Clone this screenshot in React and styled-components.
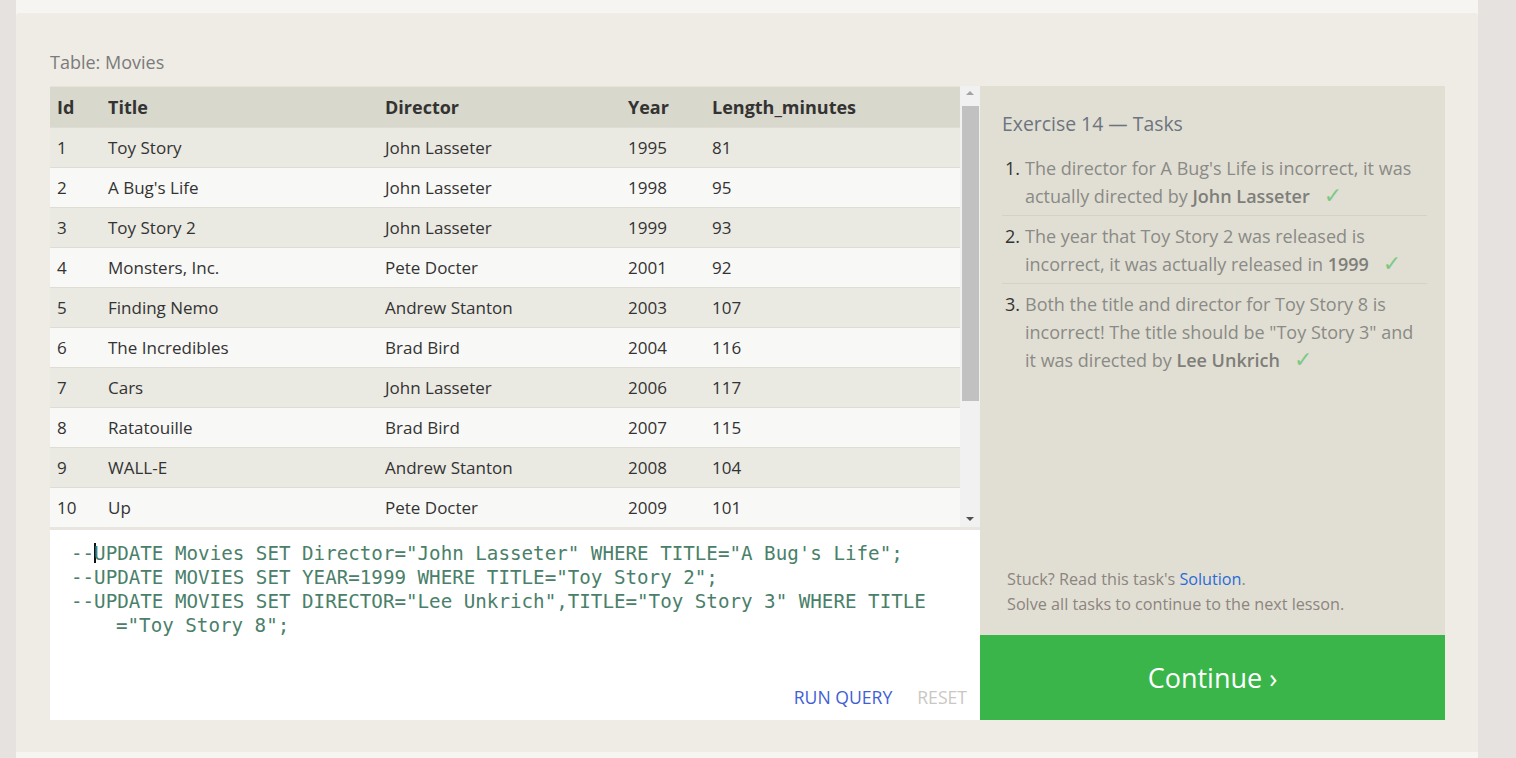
import React from 'react';
import styled, { createGlobalStyle } from 'styled-components';

const GlobalStyle = createGlobalStyle`
  html, body {
    margin: 0;
    padding: 0;
    background: #e6e2df;
    font-family: 'Open Sans', 'Noto Sans', sans-serif;
  }
`;

const Page = styled.div`
  width: 1462px;
  margin-left: 16px;
  height: 758px;
  background: #f6f5f1;
  padding-top: 13px;
  box-sizing: border-box;
`;

const Panel = styled.div`
  height: 739px;
  background: #efece5;
  border-radius: 3px 3px 0 0;
  padding: 36px 33px 0 34px;
  box-sizing: border-box;
`;

const Caption = styled.div`
  font-size: 18px;
  color: #7b7b7b;
  line-height: 26px;
  margin-bottom: 11px;
`;

const Workspace = styled.div`
  display: flex;
  height: 634px;
`;

const LeftColumn = styled.div`
  width: 930px;
  display: flex;
  flex-direction: column;
`;

const TableArea = styled.div`
  display: flex;
  height: 441px;
  border-bottom: 3px solid #e8e6df;
`;

const TableViewport = styled.div`
  flex: 1;
  overflow: hidden;
`;

const Table = styled.table`
  width: 100%;
  border-collapse: collapse;
  table-layout: fixed;
  font-size: 17px;
  color: #333;
`;

const HeadCell = styled.th`
  text-align: left;
  font-weight: 700;
  font-size: 18px;
  background: #d9d8cc;
  height: 41px;
  padding: 0 7px;
  border-top: 1px solid #e4e3da;
  box-sizing: border-box;
`;

const Row = styled.tr`
  background: ${p => (p.$odd ? '#eae9e2' : '#f8f8f6')};
`;

const Cell = styled.td`
  height: 40px;
  padding: 0 7px;
  border-top: 1px solid #dedcd4;
  box-sizing: border-box;
  white-space: nowrap;
`;

const Scrollbar = styled.div`
  width: 20px;
  background: #f1f1f1;
  display: flex;
  flex-direction: column;
  align-items: center;
  padding-top: 5px;
  box-sizing: border-box;
`;

const Arrow = styled.div`
  width: 0;
  height: 0;
  border-left: 4px solid transparent;
  border-right: 4px solid transparent;
  ${p => (p.$down ? 'border-top: 4px solid #505050;' : 'border-bottom: 4px solid #a3a3a3;')}
`;

const Thumb = styled.div`
  width: 17px;
  height: 295px;
  background: #c1c1c1;
  margin: 11px 0 0 1px;
`;

const Spacer = styled.div`
  flex: 1;
`;

const DownArrow = styled(Arrow)`
  margin-bottom: 6px;
`;

const Editor = styled.div`
  flex: 1;
  background: #fff;
  display: flex;
  flex-direction: column;
  padding: 12px 13px 11px 21px;
  box-sizing: border-box;
`;

const Code = styled.pre`
  margin: 0;
  font-family: 'DejaVu Sans Mono', 'Liberation Mono', monospace;
  font-size: 19.2px;
  line-height: 24px;
  color: #4a806a;
  flex: 1;
`;

const CodeLine = styled.div`
  padding-left: ${p => (p.$wrap ? '45px' : '0')};
`;

const Caret = styled.span`
  display: inline-block;
  width: 2px;
  height: 20px;
  background: #111;
  vertical-align: -3px;
  margin-right: -2px;
`;

const Actions = styled.div`
  display: flex;
  justify-content: flex-end;
  gap: 25px;
`;

const ActionButton = styled.span`
  font-size: 17.6px;
  text-transform: uppercase;
  color: ${p => (p.$muted ? '#c9c7c3' : '#3f5fd5')};
`;

const Side = styled.div`
  width: 465px;
  display: flex;
  flex-direction: column;
`;

const TaskPanel = styled.div`
  flex: 1;
  background: #e1dfd3;
  padding: 24px 18px 18px 22px;
  display: flex;
  flex-direction: column;
  box-sizing: border-box;
`;

const TaskTitle = styled.div`
  font-size: 19.4px;
  color: #6d7480;
  line-height: 28px;
  margin-bottom: 16px;
`;

const TaskList = styled.div`
  display: flex;
  flex-direction: column;
`;

const Task = styled.div`
  display: flex;
  padding: 0 0 5px 0;
  margin-bottom: 6px;
  border-bottom: ${p => (p.$last ? 'none' : '1px solid #d4d2c6')};
`;

const TaskNum = styled.span`
  width: 20px;
  flex-shrink: 0;
  padding-left: 3px;
  color: #333;
  font-size: 18px;
  line-height: 28px;
`;

const TaskText = styled.span`
  color: #8a8a86;
  font-size: 18px;
  line-height: 28px;
  b {
    color: #7e7e7a;
    font-weight: 600;
  }
`;

const Check = styled.span`
  color: #7cc885;
  font-family: 'DejaVu Sans', sans-serif;
  font-size: 22px;
  line-height: 20px;
  margin-left: 14px;
`;

const Help = styled.div`
  margin-top: auto;
  padding-left: 5px;
  font-size: 16.2px;
  line-height: 25px;
  color: #8c8480;
  a {
    color: #2a6bd8;
    text-decoration: none;
  }
`;

const ContinueButton = styled.div`
  height: 85px;
  background: #3ab54a;
  color: #fff;
  font-size: 27px;
  display: flex;
  align-items: center;
  justify-content: center;
`;

const movies = [
  [1, 'Toy Story', 'John Lasseter', 1995, 81],
  [2, "A Bug's Life", 'John Lasseter', 1998, 95],
  [3, 'Toy Story 2', 'John Lasseter', 1999, 93],
  [4, 'Monsters, Inc.', 'Pete Docter', 2001, 92],
  [5, 'Finding Nemo', 'Andrew Stanton', 2003, 107],
  [6, 'The Incredibles', 'Brad Bird', 2004, 116],
  [7, 'Cars', 'John Lasseter', 2006, 117],
  [8, 'Ratatouille', 'Brad Bird', 2007, 115],
  [9, 'WALL-E', 'Andrew Stanton', 2008, 104],
  [10, 'Up', 'Pete Docter', 2009, 101],
  [11, 'Toy Story 3', 'Lee Unkrich', 2010, 103],
  [12, 'Cars 2', 'John Lasseter', 2011, 120],
];

const App = () => {
  return (
    <>
      <GlobalStyle />
      <Page>
        <Panel>
          <Caption>Table: Movies</Caption>
          <Workspace>
            <LeftColumn>
              <TableArea>
                <TableViewport>
                  <Table>
                    <colgroup>
                      <col style={{ width: 51 }} />
                      <col style={{ width: 277 }} />
                      <col style={{ width: 243 }} />
                      <col style={{ width: 84 }} />
                      <col />
                    </colgroup>
                    <thead>
                      <tr>
                        <HeadCell>Id</HeadCell>
                        <HeadCell>Title</HeadCell>
                        <HeadCell>Director</HeadCell>
                        <HeadCell>Year</HeadCell>
                        <HeadCell>Length_minutes</HeadCell>
                      </tr>
                    </thead>
                    <tbody>
                      {movies.map((m, i) => (
                        <Row key={m[0]} $odd={i % 2 === 0}>
                          {m.map((v, j) => (
                            <Cell key={j}>{v}</Cell>
                          ))}
                        </Row>
                      ))}
                    </tbody>
                  </Table>
                </TableViewport>
                <Scrollbar>
                  <Arrow />
                  <Thumb />
                  <Spacer />
                  <DownArrow $down />
                </Scrollbar>
              </TableArea>
              <Editor>
                <Code>
                  <CodeLine>--<Caret />UPDATE Movies SET Director="John Lasseter" WHERE TITLE="A Bug's Life";</CodeLine>
                  <CodeLine>--UPDATE MOVIES SET YEAR=1999 WHERE TITLE="Toy Story 2";</CodeLine>
                  <CodeLine>--UPDATE MOVIES SET DIRECTOR="Lee Unkrich",TITLE="Toy Story 3" WHERE TITLE</CodeLine>
                  <CodeLine $wrap>="Toy Story 8";</CodeLine>
                </Code>
                <Actions>
                  <ActionButton>Run Query</ActionButton>
                  <ActionButton $muted>Reset</ActionButton>
                </Actions>
              </Editor>
            </LeftColumn>
            <Side>
              <TaskPanel>
                <TaskTitle>Exercise 14 — Tasks</TaskTitle>
                <TaskList>
                  <Task>
                    <TaskNum>1.</TaskNum>
                    <TaskText>
                      The director for A Bug's Life is incorrect, it was actually directed by <b>John Lasseter</b>
                      <Check>✓</Check>
                    </TaskText>
                  </Task>
                  <Task>
                    <TaskNum>2.</TaskNum>
                    <TaskText>
                      The year that Toy Story 2 was released is incorrect, it was actually released in <b>1999</b>
                      <Check>✓</Check>
                    </TaskText>
                  </Task>
                  <Task $last>
                    <TaskNum>3.</TaskNum>
                    <TaskText>
                      Both the title and director for Toy Story 8 is incorrect! The title should be "Toy Story 3" and it was directed by <b>Lee Unkrich</b>
                      <Check>✓</Check>
                    </TaskText>
                  </Task>
                </TaskList>
                <Help>
                  Stuck? Read this task's <a href="#">Solution</a>.
                  <br />
                  Solve all tasks to continue to the next lesson.
                </Help>
              </TaskPanel>
              <ContinueButton>Continue ›</ContinueButton>
            </Side>
          </Workspace>
        </Panel>
      </Page>
    </>
  );
};

export default App;
